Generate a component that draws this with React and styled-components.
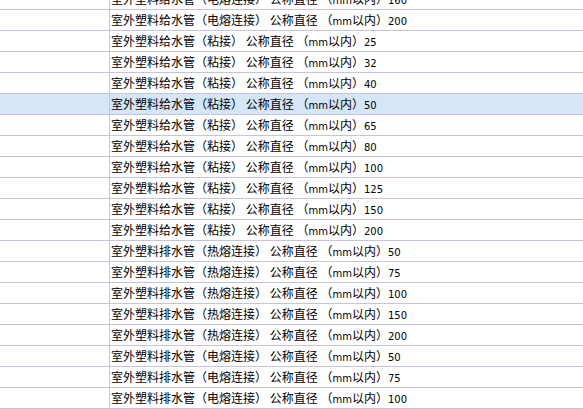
import React from "react";
import styled, { createGlobalStyle } from "styled-components";

const GlobalStyle = createGlobalStyle`
    html, body {
        margin: 0;
        padding: 0;
        background: #fff;
    }
    body {
        font-family: "Noto Sans CJK SC", "Noto Sans", sans-serif;
        overflow: hidden;
    }
`;

const rows = [
    ["给水管", "电熔连接", "160"],
    ["给水管", "电熔连接", "200"],
    ["给水管", "粘接", "25"],
    ["给水管", "粘接", "32"],
    ["给水管", "粘接", "40"],
    ["给水管", "粘接", "50"],
    ["给水管", "粘接", "65"],
    ["给水管", "粘接", "80"],
    ["给水管", "粘接", "100"],
    ["给水管", "粘接", "125"],
    ["给水管", "粘接", "150"],
    ["给水管", "粘接", "200"],
    ["排水管", "热熔连接", "50"],
    ["排水管", "热熔连接", "75"],
    ["排水管", "热熔连接", "100"],
    ["排水管", "热熔连接", "150"],
    ["排水管", "热熔连接", "200"],
    ["排水管", "电熔连接", "50"],
    ["排水管", "电熔连接", "75"],
    ["排水管", "电熔连接", "100"],
];

const SELECTED = 5;

const App = () => {
    return (
        <Viewport>
            <GlobalStyle />
            <Table>
                {rows.map(([pipe, joint, size], i) => (
                    <Row key={i} selected={i === SELECTED}>
                        <IndexCell />
                        <NameCell>
                            室外塑料{pipe}（{joint}） 公称直径 （<Latin>mm</Latin>以内）<Latin>{size}</Latin>
                        </NameCell>
                    </Row>
                ))}
            </Table>
        </Viewport>
    );
};

export default App;

const Viewport = styled.div`
    width: 583px;
    height: 409px;
    overflow: hidden;
`;

// the list is scrolled, so the first row is only partly shown
const Table = styled.div`
    margin-top: -11px;
    display: flex;
    flex-direction: column;
`;

const Row = styled.div`
    display: grid;
    grid-template-columns: 110px 1fr;
    height: 20px;
    border-bottom: 1px solid #c5c5d9;
    background: ${p => (p.selected ? "#d4e6f8" : "#fff")};
`;

const IndexCell = styled.div`
    border-right: 1px solid #c5c5d9;
`;

const NameCell = styled.div`
    padding-left: 1px;
    font-size: 12px;
    line-height: 20px;
    color: #000;
    white-space: nowrap;
    overflow: hidden;
`;

const Latin = styled.span`
    font-family: "DejaVu Sans", sans-serif;
    font-size: 10px;
`;
